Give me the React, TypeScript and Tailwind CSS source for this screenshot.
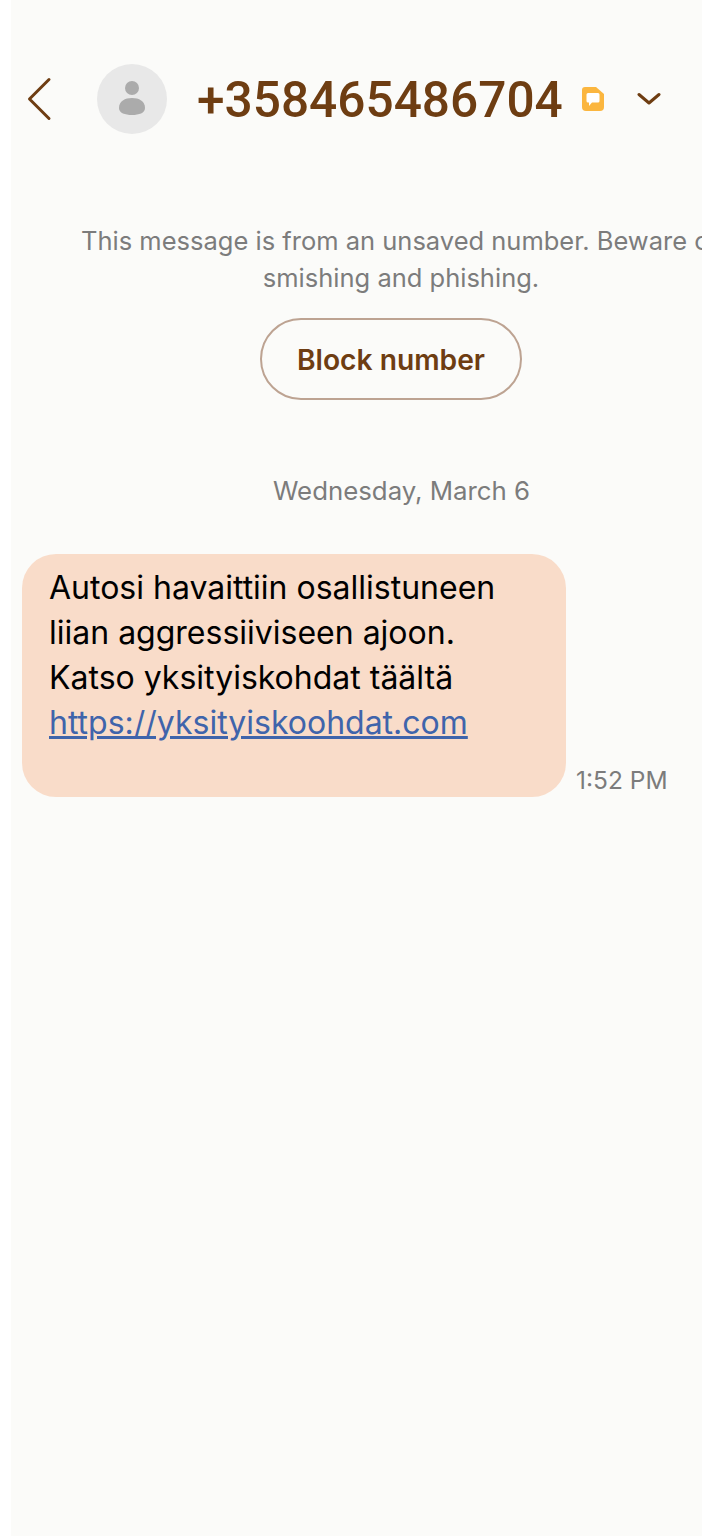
import React from "react";

export default function App() {
  return (
    <div className="h-[1536px] w-[713px] overflow-hidden bg-white font-['Inter',sans-serif]">
      <div className="ml-[11px] h-[1536px] w-[691px] overflow-hidden bg-[#fbfbf9]">
        <header className="mt-[64px] flex h-[70px] items-center pl-[15px]">
          <svg width="26" height="44" viewBox="0 0 26 44" fill="none" className="shrink-0">
            <path d="M23 2.5 L3.5 22 L23 41.5" stroke="#6e3d12" strokeWidth="3" strokeLinecap="round" strokeLinejoin="round" />
          </svg>
          <div className="ml-[45px] flex h-[70px] w-[70px] shrink-0 items-center justify-center rounded-full bg-[#e8e8e8]">
            <svg width="26" height="36" viewBox="0 0 26 36">
              <circle cx="13" cy="7" r="7" fill="#ababab" />
              <path d="M0 27 C0 20 6 17 13 17 C20 17 26 20 26 27 C26 32 20 34 13 34 C6 34 0 32 0 27 Z" fill="#ababab" />
            </svg>
          </div>
          <h1 className="ml-[30px] pt-[3px] font-['Roboto',sans-serif] text-[49.6px] font-medium leading-none whitespace-nowrap text-[#6e3d12]">+358465486704</h1>
          <svg width="24" height="26" viewBox="0 0 24 26" className="ml-[18px] shrink-0">
            <path d="M4 1 H15 L23 8 V21 A4 4 0 0 1 19 25 H5 A4 4 0 0 1 1 21 V4 A3 3 0 0 1 4 1 Z" fill="#fbb63f" />
            <path d="M7 7 H17 A1.5 1.5 0 0 1 18.5 8.5 V15 A1.5 1.5 0 0 1 17 16.5 H11 L8 20 V16.5 H7 A1.5 1.5 0 0 1 5.5 15 V8.5 A1.5 1.5 0 0 1 7 7 Z" fill="#fff" />
          </svg>
          <svg width="24" height="14" viewBox="0 0 24 14" fill="none" className="ml-[32px] shrink-0">
            <path d="M2 2.5 L12 11 L22 2.5" stroke="#6e3d12" strokeWidth="3" strokeLinecap="round" strokeLinejoin="round" />
          </svg>
        </header>

        <div className="mt-[88px] ml-[70px] w-[640px] text-[25.5px] leading-[37px] text-[#7c7c7c]">
          <p className="whitespace-nowrap">This message is from an unsaved number. Beware of</p>
          <p className="whitespace-nowrap text-center">smishing and phishing.</p>
        </div>

        <div className="mt-[22px] ml-[249px] flex h-[82px] w-[262px] items-center justify-center rounded-full border-2 border-[#bda392] pt-[2px] text-[28.2px] font-semibold text-[#6e3d12]">
          Block number
        </div>

        <p className="mt-[69px] pl-[262px] text-[25.8px] leading-[44px] whitespace-nowrap text-[#7c7c7c]">Wednesday, March 6</p>

        <div className="mt-[41px] flex items-end pl-[11px]">
          <div className="h-[243px] w-[544px] shrink-0 rounded-[34px] bg-[#f9dcc9] pt-[11px] pl-[27px] text-[32px] leading-[45px] text-black">
            <p className="whitespace-nowrap">Autosi havaittiin osallistuneen</p>
            <p className="whitespace-nowrap">liian aggressiiviseen ajoon.</p>
            <p className="whitespace-nowrap">Katso yksityiskohdat täältä</p>
            <p className="whitespace-nowrap text-[#3f64ab] underline">https://yksityiskoohdat.com</p>
          </div>
          <span className="ml-[10px] pb-[2px] text-[24.5px] leading-[30px] whitespace-nowrap text-[#7c7c7c]">1:52 PM</span>
        </div>
      </div>
    </div>
  );
}
